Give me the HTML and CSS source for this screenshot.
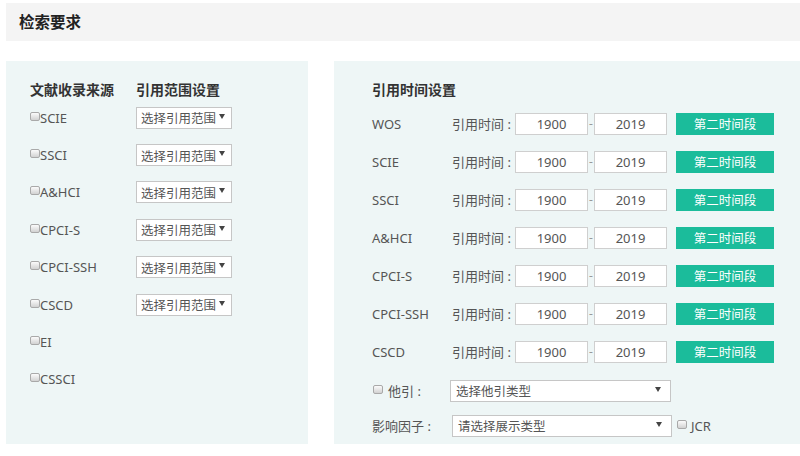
FILE: index.html
```html
<!DOCTYPE html>
<html lang="zh-CN">
<head>
<meta charset="utf-8">
<title>检索要求</title>
<link rel="stylesheet" href="styles.css">
</head>
<body>
<div class="page">
  <div class="hd">检索要求</div>
  <div class="main">
    <section class="panel left">
      <div class="grid">
        <div class="h">文献收录来源</div>
        <div class="h">引用范围设置</div>

        <label class="chk"><span class="box"></span>SCIE</label>
        <div class="sel sm"><span>选择引用范围</span><span class="arr"></span></div>

        <label class="chk"><span class="box"></span>SSCI</label>
        <div class="sel sm"><span>选择引用范围</span><span class="arr"></span></div>

        <label class="chk"><span class="box"></span>A&amp;HCI</label>
        <div class="sel sm"><span>选择引用范围</span><span class="arr"></span></div>

        <label class="chk"><span class="box"></span>CPCI-S</label>
        <div class="sel sm"><span>选择引用范围</span><span class="arr"></span></div>

        <label class="chk"><span class="box"></span>CPCI-SSH</label>
        <div class="sel sm"><span>选择引用范围</span><span class="arr"></span></div>

        <label class="chk"><span class="box"></span>CSCD</label>
        <div class="sel sm"><span>选择引用范围</span><span class="arr"></span></div>

        <label class="chk"><span class="box"></span>EI</label>
        <div></div>

        <label class="chk"><span class="box"></span>CSSCI</label>
        <div></div>
      </div>
    </section>

    <section class="panel right">
      <div class="h">引用时间设置</div>
      <div class="rows">
        <div class="trow"><span class="name">WOS</span><span class="lbl">引用时间 :</span><input class="yr" value="1900"><span class="dash">-</span><input class="yr" value="2019"><button class="btn">第二时间段</button></div>
        <div class="trow"><span class="name">SCIE</span><span class="lbl">引用时间 :</span><input class="yr" value="1900"><span class="dash">-</span><input class="yr" value="2019"><button class="btn">第二时间段</button></div>
        <div class="trow"><span class="name">SSCI</span><span class="lbl">引用时间 :</span><input class="yr" value="1900"><span class="dash">-</span><input class="yr" value="2019"><button class="btn">第二时间段</button></div>
        <div class="trow"><span class="name">A&amp;HCI</span><span class="lbl">引用时间 :</span><input class="yr" value="1900"><span class="dash">-</span><input class="yr" value="2019"><button class="btn">第二时间段</button></div>
        <div class="trow"><span class="name">CPCI-S</span><span class="lbl">引用时间 :</span><input class="yr" value="1900"><span class="dash">-</span><input class="yr" value="2019"><button class="btn">第二时间段</button></div>
        <div class="trow"><span class="name">CPCI-SSH</span><span class="lbl">引用时间 :</span><input class="yr" value="1900"><span class="dash">-</span><input class="yr" value="2019"><button class="btn">第二时间段</button></div>
        <div class="trow"><span class="name">CSCD</span><span class="lbl">引用时间 :</span><input class="yr" value="1900"><span class="dash">-</span><input class="yr" value="2019"><button class="btn">第二时间段</button></div>
        <div class="trow other">
          <label class="chk2"><span class="box"></span>他引 :</label>
          <div class="sel wide"><span>选择他引类型</span><span class="arr"></span></div>
        </div>
        <div class="trow impact">
          <span class="name">影响因子 :</span>
          <div class="sel wide2"><span>请选择展示类型</span><span class="arr"></span></div>
          <label class="chk3"><span class="box"></span>JCR</label>
        </div>
      </div>
    </section>
  </div>
</div>
</body>
</html>
```

FILE: styles.css
```css
* { box-sizing: border-box; }
html, body { margin: 0; padding: 0; background: #fff; }
body {
  font-family: "Noto Sans", "Noto Sans CJK SC", sans-serif;
  color: #555;
  width: 800px;
  height: 456px;
  overflow: hidden;
}
.hd {
  margin: 3px 0 0 6px;
  height: 38px;
  line-height: 38px;
  padding-left: 13px;
  background: #f4f4f4;
  font-size: 15.5px;
  font-weight: bold;
  color: #222;
}
.main {
  display: flex;
  gap: 26px;
  margin: 20px 0 0 6px;
  height: 383px;
}
.panel { background: #eef6f6; }
.left { width: 302px; flex-shrink: 0; padding: 20px 0 0 24px; }
.right { flex: 1; padding: 20px 0 0 38px; }

.h {
  font-size: 14px;
  line-height: 18px;
  font-weight: 600;
  color: #333;
  white-space: nowrap;
}

.grid {
  display: grid;
  grid-template-columns: 106px 96px;
  grid-template-rows: 18px;
  grid-auto-rows: 37.4px;
  align-items: center;
}
.grid .h { align-self: start; }

.chk, .chk2, .chk3 {
  display: flex;
  align-items: center;
  font-size: 13px;
  color: #555;
  line-height: 16px;
  white-space: nowrap;
  flex-shrink: 0;
}
.box {
  display: inline-block;
  flex-shrink: 0;
  width: 10px;
  height: 9px;
  border: 1px solid #a9a9a9;
  border-radius: 2px;
  background: linear-gradient(#fbfbfb, #d2d2d2);
  margin-top: -3px;
}

.sel {
  display: flex;
  align-items: center;
  justify-content: space-between;
  flex-shrink: 0;
  height: 22px;
  background: #fff;
  border: 1px solid #c6c6c6;
  font-size: 12.5px;
  color: #555;
  padding: 0 6px 0 4px;
  white-space: nowrap;
}
.sel.sm { width: 96px; }
.arr {
  width: 0;
  height: 0;
  border-left: 3px solid transparent;
  border-right: 3px solid transparent;
  border-top: 5px solid #444;
  margin-top: -3px;
}

.rows { margin-top: 5.5px; }
.trow {
  display: flex;
  align-items: center;
  height: 38px;
  font-size: 13px;
  white-space: nowrap;
}
.name { width: 80px; flex-shrink: 0; color: #555; }
.lbl { width: 63px; flex-shrink: 0; color: #555; }
.yr {
  width: 73px;
  flex-shrink: 0;
  height: 22px;
  border: 1px solid #cfcfcf;
  background: #fff;
  padding: 0;
  margin: 0;
  text-align: center;
  font-family: inherit;
  font-size: 13px;
  color: #555;
  outline: none;
}
.dash { width: 6px; flex-shrink: 0; text-align: center; color: #999; font-size: 12px; }
.btn {
  margin-left: 9px;
  width: 98px;
  flex-shrink: 0;
  height: 22px;
  border: none;
  background: #1bbc9b;
  color: #fff;
  font-family: inherit;
  font-size: 12.5px;
  padding: 0;
}
.trow.other { height: 40px; }
.chk2 .box { margin-left: 1px; margin-right: 5px; }
.chk2 { width: 78px; }
.sel.wide { width: 221px; padding-left: 5px; padding-right: 9px; }
.trow.impact { height: 30px; }
.sel.wide2 { width: 220px; padding-left: 5px; padding-right: 9px; }
.chk3 { margin-left: 5px; }
.chk3 .box { margin-right: 4px; }
```
